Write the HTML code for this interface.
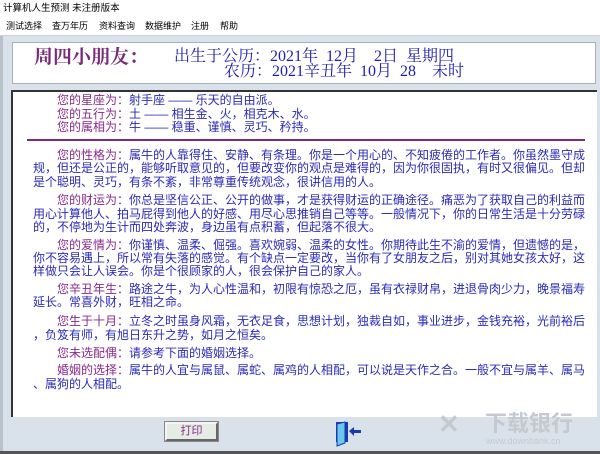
<!DOCTYPE html>
<html><head><meta charset="utf-8"><style>
*{margin:0;padding:0;box-sizing:border-box}
body{width:600px;height:454px;overflow:hidden;background:#d9e2eb;font-family:"Liberation Sans","Noto Sans CJK SC",sans-serif;position:relative}
.title{position:absolute;left:0;top:0;width:600px;height:17px;background:#fff;font-size:9.5px;line-height:17px;padding-left:3px;color:#000}
.menu{position:absolute;left:0;top:17px;width:600px;height:19px;background:#fff;font-size:9px;line-height:18px;color:#000;border-bottom:1px solid #c8d0d8}
.menu span{position:absolute;top:0}
.hdr{position:absolute;left:12px;top:42px;width:584px;height:42px;background:#fff;border:1px solid #a8b0b8}
.serif{font-family:"Liberation Serif","Noto Serif CJK SC",serif}
.box{position:absolute;left:11px;top:90px;width:586px;height:327px;background:#fff;border-left:2px solid #333;border-top:2px solid #333}
.ln{position:absolute;white-space:nowrap;font-size:12px;line-height:13px;color:#2b2bb8;font-family:"Liberation Sans","Noto Sans CJK SC",sans-serif}
.p{color:#8a2a8a}
.btn{position:absolute;left:165px;top:422px;width:53px;height:19px;background:#e4ece4;border:2px solid;border-color:#f4f4f4 #666 #666 #f4f4f4;outline:1px solid #888;font-size:11px;color:#8a2a8a;text-align:center;line-height:15px}
</style></head><body>
<div class="title">计算机人生预测 未注册版本</div>
<div class="menu"><span style="left:6px">测试选择</span><span style="left:52px">查万年历</span><span style="left:99px">资料查询</span><span style="left:145px">数据维护</span><span style="left:191px">注册</span><span style="left:220px">帮助</span></div>
<div style="position:absolute;left:0;top:36px;width:3px;height:418px;background:#b8c0c8"></div>
<div class="hdr"></div>
<div class="serif" style="position:absolute;left:34px;top:47px;font-size:19px;line-height:22px;color:#7a2a7a;font-weight:bold;white-space:nowrap">周四小朋友：</div>
<div class="serif" style="position:absolute;left:174px;top:49px;font-size:16px;line-height:16px;color:#2020b0;white-space:nowrap">出生于公历：2021年&nbsp;&nbsp;12月&nbsp;&nbsp;&nbsp;&nbsp;2日&nbsp;&nbsp;星期四</div>
<div class="serif" style="position:absolute;left:224px;top:64px;font-size:16px;line-height:16px;color:#2020b0;white-space:nowrap">农历：2021辛丑年&nbsp;&nbsp;10月&nbsp;&nbsp;28&nbsp;&nbsp;&nbsp;&nbsp;未时</div>
<div class="box"></div>
<div class="ln" style="left:57px;top:94px"><span class="p">您的星座为：</span>射手座 —— 乐天的自由派。</div>
<div class="ln" style="left:57px;top:108px"><span class="p">您的五行为：</span>土 —— 相生金、火，相克木、水。</div>
<div class="ln" style="left:57px;top:121px"><span class="p">您的属相为：</span>牛 —— 稳重、谨慎、灵巧、矜持。</div>
<div style="position:absolute;left:27px;top:139px;width:558px;height:2px;background:#7a2a7a"></div>
<div class="ln" style="left:57px;top:149px"><span class="p">您的性格为：</span>属牛的人靠得住、安静、有条理。你是一个用心的、不知疲倦的工作者。你虽然墨守成</div>
<div class="ln" style="left:33px;top:162px">规，但还是公正的，能够听取意见的，但要改变你的观点是难得的，因为你很固执，有时又很偏见。但却</div>
<div class="ln" style="left:33px;top:176px">是个聪明、灵巧，有条不紊，非常尊重传统观念，很讲信用的人。</div>
<div class="ln" style="left:57px;top:194px"><span class="p">您的财运为：</span>你总是坚信公正、公开的做事，才是获得财运的正确途径。痛恶为了获取自己的利益而</div>
<div class="ln" style="left:33px;top:208px">用心计算他人、拍马屁得到他人的好感、用尽心思推销自己等等。一般情况下，你的日常生活是十分劳碌</div>
<div class="ln" style="left:33px;top:221px">的，不停地为生计而四处奔波，身边虽有点积蓄，但起落不很大。</div>
<div class="ln" style="left:57px;top:239px"><span class="p">您的爱情为：</span>你谨慎、温柔、倔强。喜欢婉弱、温柔的女性。你期待此生不渝的爱情，但遗憾的是，</div>
<div class="ln" style="left:33px;top:252px">你不容易遇上，所以常有失落的感觉。有个缺点一定要改，当你有了女朋友之后，别对其她女孩太好，这</div>
<div class="ln" style="left:33px;top:265px">样做只会让人误会。你是个很顾家的人，很会保护自己的家人。</div>
<div class="ln" style="left:57px;top:283px"><span class="p">您辛丑年生：</span>路途之牛，为人心性温和，初限有惊恐之厄，虽有衣禄财帛，进退骨肉少力，晚景福寿</div>
<div class="ln" style="left:33px;top:296px">延长。常喜外财，旺相之命。</div>
<div class="ln" style="left:57px;top:315px"><span class="p">您生于十月：</span>立冬之时虽身风霜，无衣足食，思想计划，独裁自如，事业进步，金钱充裕，光前裕后</div>
<div class="ln" style="left:33px;top:329px">，负笈有师，有旭日东升之势，如月之恒矣。</div>
<div class="ln" style="left:57px;top:347px"><span class="p">您未选配偶：</span>请参考下面的婚姻选择。</div>
<div class="ln" style="left:57px;top:364px"><span class="p">婚姻的选择：</span>属牛的人宜与属鼠、属蛇、属鸡的人相配，可以说是天作之合。一般不宜与属羊、属马</div>
<div class="ln" style="left:33px;top:378px">、属狗的人相配。</div>
<div class="btn">打印</div>
<svg style="position:absolute;left:335px;top:421px" width="28" height="26" viewBox="0 0 28 26">
<rect x="1" y="1" width="10" height="20" fill="#1a3ab0"/>
<polygon points="2,3 10,1 10,22 2,25" fill="#6ac8e8" stroke="#1a3ab0" stroke-width="1"/>
<rect x="11" y="1" width="2" height="20" fill="#1a3ab0"/>
<polygon points="14,10 19,6 19,9 26,9 26,12 19,12 19,15" fill="#1a3ab0"/>
</svg>
<div style="position:absolute;left:438px;top:410px;font-size:26px;line-height:28px;color:#c4c9cf;font-weight:bold;white-space:nowrap">✕</div>
<div style="position:absolute;left:485px;top:412px;font-size:22px;line-height:24px;color:#c4c9cf;font-weight:bold;white-space:nowrap">下载银行</div>
<div style="position:absolute;left:486px;top:436px;font-size:9px;line-height:10px;color:#c4c9cf;white-space:nowrap">www.downbank.cn</div>
<div style="position:absolute;left:0;top:451px;width:600px;height:3px;background:#555"></div>
</body></html>
